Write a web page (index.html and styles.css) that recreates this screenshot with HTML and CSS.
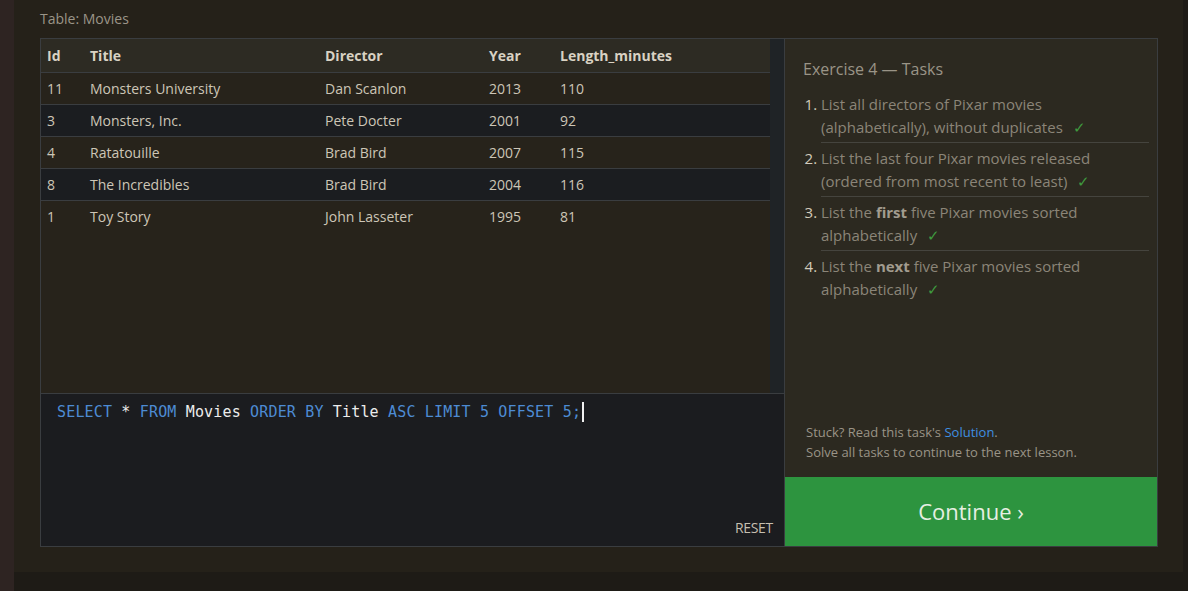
FILE: index.html
```html
<!DOCTYPE html>
<html>
<head>
<meta charset="utf-8">
<link rel="stylesheet" href="styles.css">
</head>
<body>
<div class="page">
  <div class="caption">Table: Movies</div>
  <div class="workspace">
    <div class="left">
      <div class="table-area">
        <div class="table-wrap">
          <table class="movies">
            <thead>
              <tr><th class="c-id">Id</th><th class="c-title">Title</th><th class="c-dir">Director</th><th class="c-year">Year</th><th>Length_minutes</th></tr>
            </thead>
            <tbody>
              <tr><td>11</td><td>Monsters University</td><td>Dan Scanlon</td><td>2013</td><td>110</td></tr>
              <tr><td>3</td><td>Monsters, Inc.</td><td>Pete Docter</td><td>2001</td><td>92</td></tr>
              <tr><td>4</td><td>Ratatouille</td><td>Brad Bird</td><td>2007</td><td>115</td></tr>
              <tr><td>8</td><td>The Incredibles</td><td>Brad Bird</td><td>2004</td><td>116</td></tr>
              <tr><td>1</td><td>Toy Story</td><td>John Lasseter</td><td>1995</td><td>81</td></tr>
            </tbody>
          </table>
        </div>
        <div class="scrolltrack"></div>
      </div>
      <div class="editor">
        <div class="code"><span class="kw">SELECT</span> <span class="id">*</span> <span class="kw">FROM</span> <span class="id">Movies</span> <span class="kw">ORDER BY</span> <span class="id">Title</span> <span class="kw">ASC LIMIT</span> <span class="num">5</span> <span class="kw">OFFSET</span> <span class="num">5</span><span class="kw">;</span><span class="cursor"></span></div>
        <div class="reset">RESET</div>
      </div>
    </div>
    <div class="right">
      <div class="tasks">
        <div class="tasks-title">Exercise 4 — Tasks</div>
        <ol class="task-list">
          <li>List all directors of Pixar movies (alphabetically), without duplicates <span class="check">✓</span></li>
          <li>List the last four Pixar movies released (ordered from most recent to least) <span class="check">✓</span></li>
          <li>List the <b>first</b> five Pixar movies sorted alphabetically <span class="check">✓</span></li>
          <li class="last">List the <b>next</b> five Pixar movies sorted alphabetically <span class="check">✓</span></li>
        </ol>
      </div>
      <div class="hint">
        <div>Stuck? Read this task's <span class="link">Solution</span>.</div>
        <div>Solve all tasks to continue to the next lesson.</div>
      </div>
      <div class="continue">Continue ›</div>
    </div>
  </div>
</div>
</body>
</html>
```

FILE: styles.css
```css
* { box-sizing: border-box; }
html, body { margin: 0; padding: 0; }
body {
  background: #1e1b16;
  border-left: 14px solid #2e2422;
  min-height: 591px;
  font-family: "Open Sans", "Noto Sans", sans-serif;
  overflow: hidden;
}
.page {
  width: 1169px;
  height: 572px;
  background: #252119;
  padding: 9px 26px 0 26px;
}
.caption {
  color: #9b9588;
  font-size: 14px;
  line-height: 19px;
  height: 29px;
}
.workspace {
  display: flex;
  width: 1118px;
  height: 509px;
  border: 1px solid #3a3d40;
}
.left {
  width: 744px;
  border-right: 1px solid #3a3d40;
  display: flex;
  flex-direction: column;
}
.table-area {
  height: 355px;
  display: flex;
  background: #27231b;
  border-bottom: 1px solid #3a3d40;
}
.table-wrap { width: 729px; }
.scrolltrack { width: 15px; background: #1f2326; }
.movies {
  width: 729px;
  border-collapse: collapse;
  font-size: 14px;
  color: #cdc6b7;
}
.movies th {
  background: #2d2b23;
  color: #d9d2c3;
  font-weight: 700;
  text-align: left;
  height: 33px;
  padding: 0 0 0 6px;
  border-bottom: 1px solid #3a3d40;
}
.movies td {
  height: 32px;
  padding: 0 0 0 6px;
  border-bottom: 1px solid #3a3d40;
}
.movies tbody tr:nth-child(even) td { background: #1b1d20; }
.movies tbody tr:last-child td { border-bottom: none; }
.c-id { width: 43px; }
.c-title { width: 235px; }
.c-dir { width: 164px; }
.c-year { width: 71px; }
.editor {
  flex: 1;
  background: #1b1c1f;
  display: flex;
  flex-direction: column;
  justify-content: space-between;
  padding: 8px 11px 9px 16px;
}
.code {
  font-family: "DejaVu Sans Mono", "Liberation Mono", monospace;
  font-size: 15px;
  line-height: 20px;
  letter-spacing: 0.16px;
  color: #e9e9e9;
  white-space: pre;
}
.kw { color: #4d8bd3; }
.num { color: #4d8bd3; }
.id { color: #ececec; }
.cursor {
  display: inline-block;
  width: 2px;
  height: 20px;
  background: #f0f0f0;
  margin-left: 1px;
  vertical-align: -5px;
}
.reset {
  align-self: flex-end;
  font-size: 14px;
  color: #c6bfb0;
  letter-spacing: -0.3px;
}
.right {
  flex: 1;
  display: flex;
  flex-direction: column;
  background: #2c2920;
}
.tasks {
  flex: 1;
  padding: 19px 8px 0 18px;
}
.tasks-title {
  color: #9a9487;
  font-size: 16px;
  line-height: 22px;
  margin-bottom: 13px;
}
.task-list {
  margin: 0;
  padding: 0 0 0 18px;
  color: #8b8578;
  font-size: 15px;
  line-height: 23px;
}
.task-list li {
  padding: 0 0 3px 0;
  border-bottom: 1px solid #45443e;
  margin-bottom: 4px;
}
.task-list li.last { border-bottom: none; }
.task-list li::marker { color: #d3cbbb; }
.task-list b { color: #a29c8f; }
.check { color: #3f9a3f; margin-left: 6px; }
.hint {
  padding: 0 10px 15px 21px;
  color: #9a9487;
  font-size: 13px;
  line-height: 20px;
}
.link { color: #3f8fe0; }
.continue {
  height: 69px;
  background: #2d943f;
  color: #e6efe3;
  font-size: 22px;
  display: flex;
  align-items: center;
  justify-content: center;
  padding-bottom: 2px;
}
```
